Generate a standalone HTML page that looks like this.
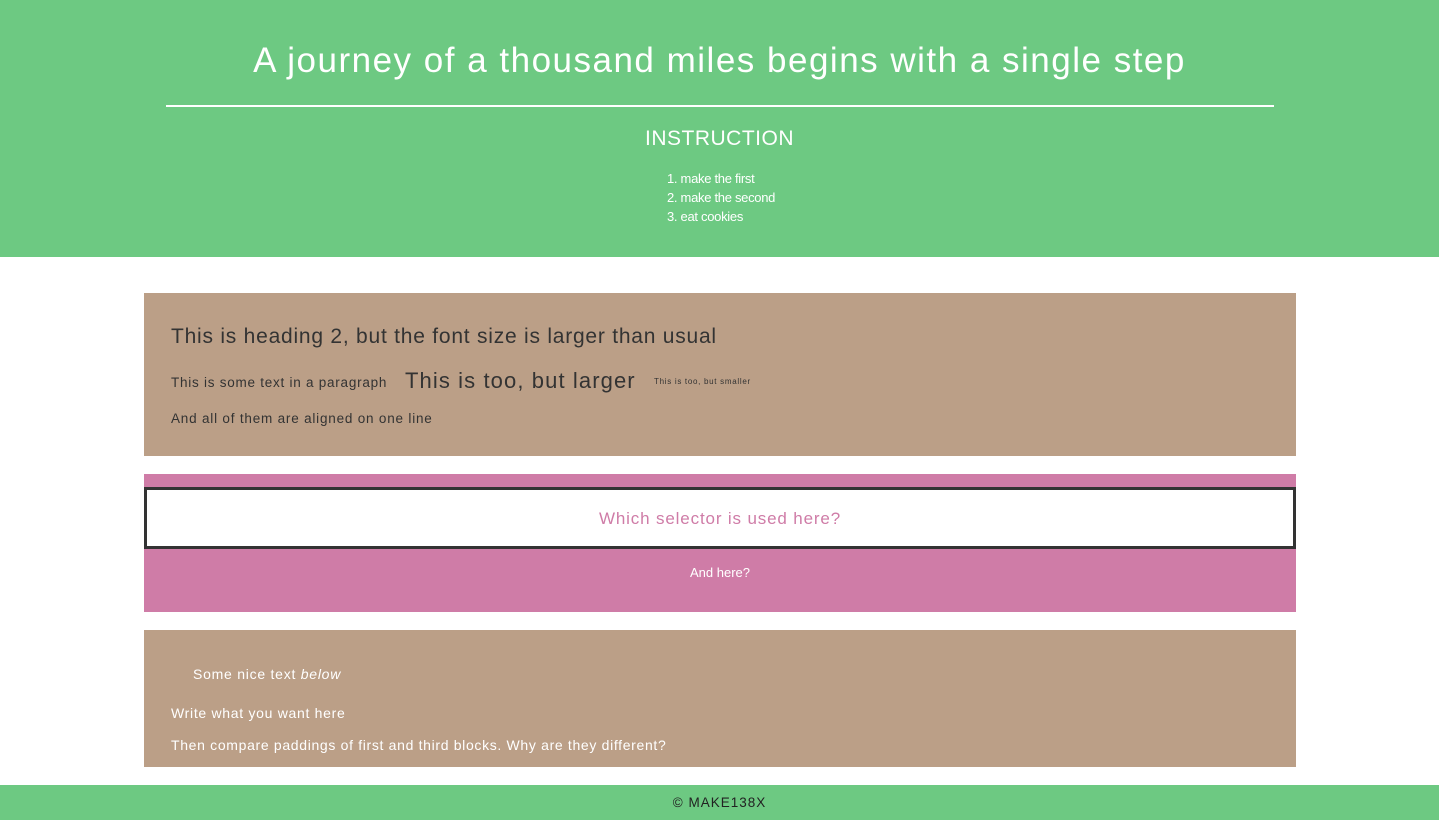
<!DOCTYPE html><html><head><style>
body{margin:0;font-family:"Liberation Sans","DejaVu Sans",sans-serif;background:#fff;width:1439px;height:820px;overflow:hidden;position:relative}
.a{position:absolute;white-space:nowrap}
</style></head><body>
<div class="a" style="left:0;top:0;width:1439px;height:257px;background:#6dc982"></div>
<div class="a" style="left:0;width:1439px;top:39px;text-align:center;color:#fff;font-size:35px;line-height:44px;letter-spacing:1.5px">A journey of a thousand miles begins with a single step</div>
<div class="a" style="left:166px;top:105px;width:1108px;height:2px;background:#fff"></div>
<div class="a" style="left:0;width:1439px;top:126px;text-align:center;color:#fff;font-size:21px;line-height:26px;letter-spacing:0.5px">INSTRUCTION</div>
<div class="a" style="left:667px;top:169px;color:#fff;font-size:13px;line-height:19px;letter-spacing:-0.3px">1. make the first<br>2. make the second<br>3. eat cookies</div>
<div class="a" style="left:144px;top:293px;width:1152px;height:163px;background:#bb9f87"></div>
<div class="a" style="left:171px;top:323px;color:#333;font-size:21px;line-height:28px;letter-spacing:0.77px">This is heading 2, but the font size is larger than usual</div>
<div class="a" style="left:171px;top:375px;color:#333;font-size:13.5px;letter-spacing:0.75px">This is some text in a paragraph</div>
<div class="a" style="left:405px;top:368px;color:#333;font-size:22px;letter-spacing:1.1px">This is too, but larger</div>
<div class="a" style="left:654px;top:377px;color:#333;font-size:8px;letter-spacing:0.7px">This is too, but smaller</div>
<div class="a" style="left:171px;top:411px;color:#333;font-size:13.5px;letter-spacing:0.8px">And all of them are aligned on one line</div>
<div class="a" style="left:144px;top:474px;width:1152px;height:138px;background:#cf7ca7"></div>
<div class="a" style="left:144px;top:487px;width:1146px;height:56px;background:#fff;border:3px solid #333"></div>
<div class="a" style="left:144px;width:1152px;top:508px;text-align:center;color:#cf7ca7;font-size:17px;line-height:22px;letter-spacing:0.85px">Which selector is used here?</div>
<div class="a" style="left:144px;width:1152px;top:564px;text-align:center;color:#fff;font-size:13px;line-height:18px">And here?</div>
<div class="a" style="left:144px;top:630px;width:1152px;height:137px;background:#bb9f87"></div>
<div class="a" style="left:193px;top:666px;color:#fff;font-size:14px;letter-spacing:0.75px">Some nice text <i>below</i></div>
<div class="a" style="left:171px;top:705px;color:#fff;font-size:14px;letter-spacing:0.7px">Write what you want here</div>
<div class="a" style="left:171px;top:737px;color:#fff;font-size:14px;letter-spacing:0.67px">Then compare paddings of first and third blocks. Why are they different?</div>
<div class="a" style="left:0;top:785px;width:1439px;height:35px;background:#6dc982"></div>
<div class="a" style="left:0;width:1439px;top:794px;text-align:center;color:#222;font-size:13.5px;line-height:18px;letter-spacing:1px">© MAKE138X</div>
</body></html>
